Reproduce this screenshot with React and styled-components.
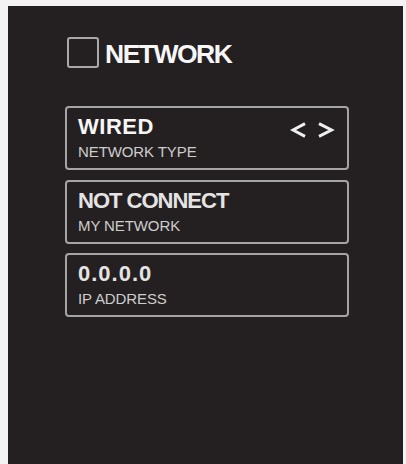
import React from "react";
import styled, { createGlobalStyle } from "styled-components";

const Global = createGlobalStyle`
  html, body { margin: 0; padding: 0; background: #f3f3f3; }
  body { font-family: "Liberation Sans", Arial, sans-serif; }
  * { box-sizing: border-box; }
`;

const Page = styled.div`
  padding: 6px 3px 0 8px;
  height: 464px;
  display: flex;
`;

const Panel = styled.div`
  flex: 1;
  background: #242021;
  padding: 31px 0 0 57px;
  display: flex;
  flex-direction: column;
`;

const Header = styled.div`
  display: flex;
  align-items: center;
  gap: 6px;
  margin-left: 2px;
  height: 31px;
`;

const CheckBox = styled.div`
  width: 32px;
  height: 31px;
  border: 2px solid #a9a9a9;
  border-radius: 3px;
`;

const HeaderTitle = styled.span`
  font-weight: 700;
  font-size: 26.5px;
  letter-spacing: -1.5px;
  color: #f6f6f6;
  line-height: 31px;
  margin-top: 4px;
`;

const CardList = styled.div`
  margin-top: 38px;
  display: flex;
  flex-direction: column;
  gap: 9.5px;
  width: 284px;
`;

const Card = styled.div`
  height: 64px;
  border: 2px solid #a4a4a4;
  border-radius: 4px;
  padding: 7px 11px 0 11px;
  display: flex;
  flex-direction: column;
`;

const TopRow = styled.div`
  display: flex;
  justify-content: space-between;
  align-items: flex-start;
`;

const Title = styled.div`
  font-weight: 700;
  font-size: 22px;
  line-height: 24px;
  letter-spacing: ${(p) => p.$tracking}px;
  color: ${(p) => (p.$dim ? "#e4e4e4" : "#f6f6f6")};
  white-space: nowrap;
`;

const Sub = styled.div`
  font-size: 15px;
  line-height: 17px;
  margin-top: 4px;
  letter-spacing: -0.1px;
  color: #cdcdcd;
  white-space: nowrap;
`;

const Arrows = styled.svg`
  margin-top: 7px;
  margin-right: 1px;
  flex: none;
`;

const items = [
  { title: "WIRED", sub: "NETWORK TYPE", arrows: true, tracking: 0.5 },
  { title: "NOT CONNECT", sub: "MY NETWORK", dim: true, tracking: -1 },
  { title: "0.0.0.0", sub: "IP ADDRESS", dim: true, tracking: 1 },
];

export default function App() {
  return (
    <>
      <Global />
      <Page>
        <Panel>
          <Header>
            <CheckBox />
            <HeaderTitle>NETWORK</HeaderTitle>
          </Header>
          <CardList>
            {items.map((it) => (
              <Card key={it.title}>
                <TopRow>
                  <Title $tracking={it.tracking} $dim={it.dim}>{it.title}</Title>
                  {it.arrows && (
                    <Arrows width="45" height="16" viewBox="0 0 45 16">
                      <polyline points="15,1.6 3,8 15,14.4" fill="none" stroke="#efefef" strokeWidth="3" />
                      <polyline points="29,1.6 41.5,8 29,14.4" fill="none" stroke="#efefef" strokeWidth="3" />
                    </Arrows>
                  )}
                </TopRow>
                <Sub>{it.sub}</Sub>
              </Card>
            ))}
          </CardList>
        </Panel>
      </Page>
    </>
  );
}
